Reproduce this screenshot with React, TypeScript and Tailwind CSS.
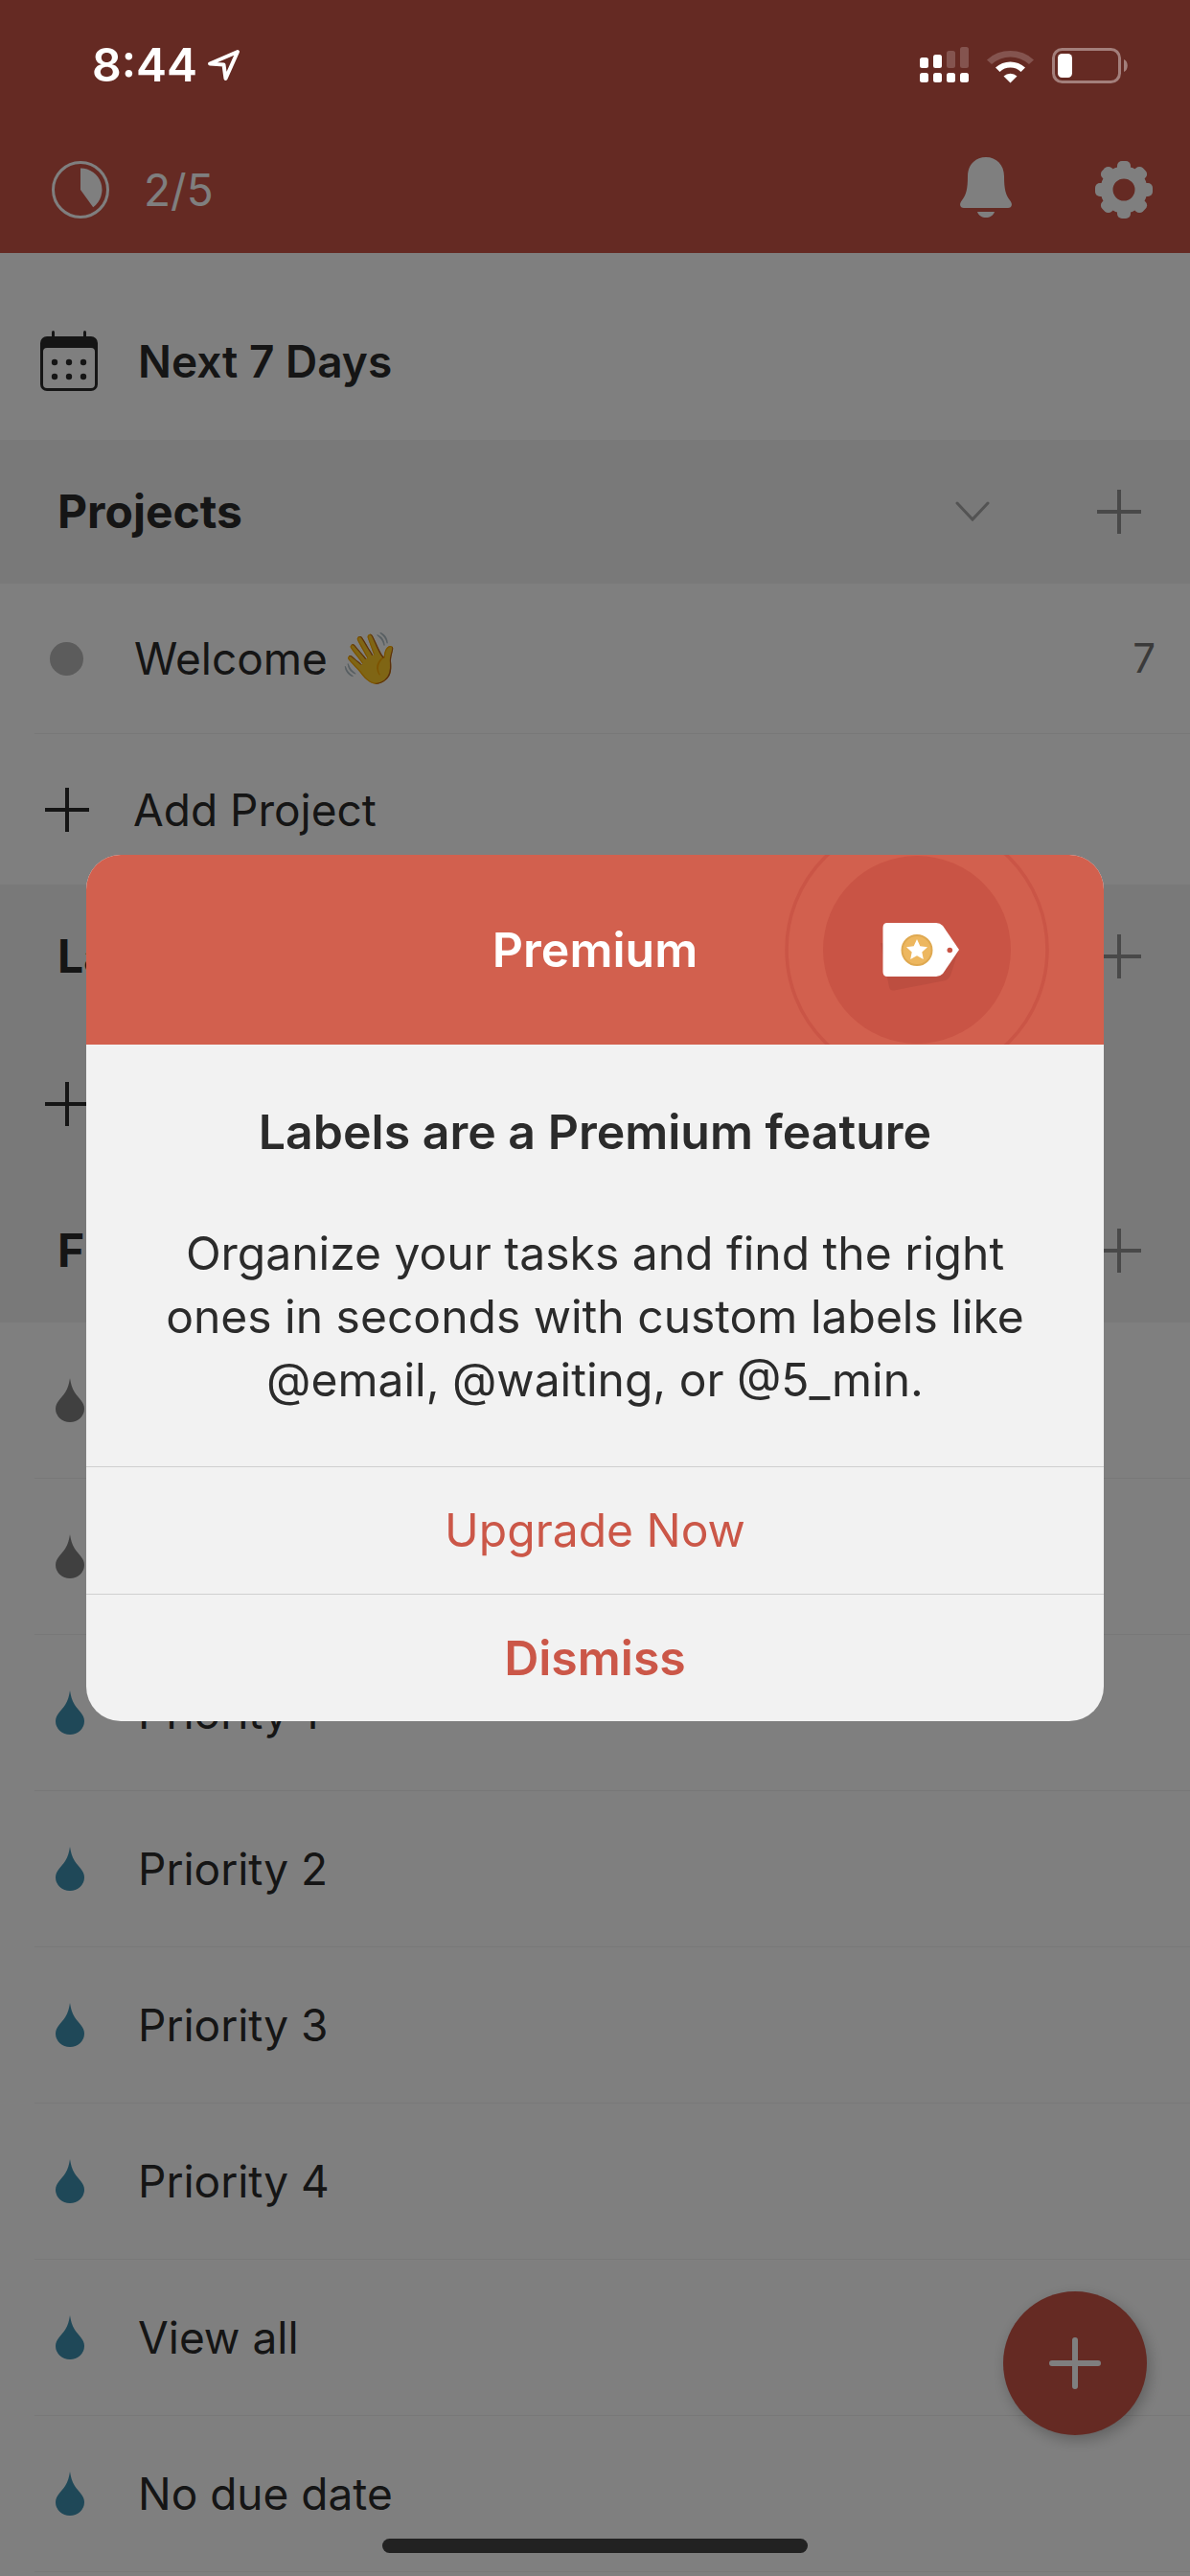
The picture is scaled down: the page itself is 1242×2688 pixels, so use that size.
import type { ReactNode } from 'react';

const FILTERS = [
    { name: 'Assigned to me', color: 'text-[#808080]' },
    { name: 'Assigned to others', color: 'text-[#808080]' },
    { name: 'Priority 1', color: 'text-[#3e90b0]' },
    { name: 'Priority 2', color: 'text-[#3e90b0]' },
    { name: 'Priority 3', color: 'text-[#3e90b0]' },
    { name: 'Priority 4', color: 'text-[#3e90b0]' },
    { name: 'View all', color: 'text-[#3e90b0]' },
    { name: 'No due date', color: 'text-[#3e90b0]' },
];

const PlusIcon = () => (
    <svg className="block size-[46px]" viewBox="0 0 46 46" stroke="currentColor" strokeWidth="4" aria-hidden="true">
        <path d="M23 0v46M0 23h46" />
    </svg>
);

const DropIcon = ({ className }: { className: string }) => (
    <svg className={`block h-[46px] w-[30px] ${className}`} viewBox="0 0 30 46" fill="currentColor" aria-hidden="true">
        <path d="M15 0C16 6 17 10 20 15C24 21 30 25 30 32A15 14 0 0 1 0 32C0 25 6 21 10 15C13 10 14 6 15 0Z" />
    </svg>
);

const CalendarIcon = () => (
    <svg className="block h-[64px] w-[60px]" viewBox="0 0 60 64" fill="currentColor" aria-hidden="true">
        <rect x="12" y="0" width="3" height="10" rx="1.5" />
        <rect x="45" y="0" width="3" height="10" rx="1.5" />
        <path fillRule="evenodd" d="M7 6h46a7 7 0 0 1 7 7v43a7 7 0 0 1-7 7H7a7 7 0 0 1-7-7V13a7 7 0 0 1 7-7zm0 12a4 4 0 0 0-4 4v34a4 4 0 0 0 4 4h46a4 4 0 0 0 4-4V22a4 4 0 0 0-4-4z" />
        {[33, 48].map((y) => [15, 30, 45].map((x) => <circle key={`${x}-${y}`} cx={x} cy={y} r="3.2" />))}
    </svg>
);

const GoalIcon = () => (
    <svg className="block size-[60px]" viewBox="0 0 60 60" aria-hidden="true">
        <circle cx="30" cy="30" r="28.5" fill="none" stroke="currentColor" strokeWidth="3" />
        <path d="M30 30V7.500A22.500 22.500 0 0 1 43.200 48.200Z" fill="currentColor" />
    </svg>
);

const BellIcon = () => (
    <svg className="block h-[64px] w-[54px]" viewBox="0 0 54 64" fill="currentColor" aria-hidden="true">
        <path d="M27 0C38 0 46 8 46 20C46 33 47.500 39 52 45C56 50 53 53 50 53H4C1 53 -2 50 2 45C6.500 39 8 33 8 20C8 8 16 0 27 0Z" />
        <path d="M18 57H36C34.500 61 31 63 27 63C23 63 19.500 61 18 57Z" />
    </svg>
);

const GearIcon = () => (
    <svg className="block size-[60px]" viewBox="-30 -30 60 60" fill="currentColor" aria-hidden="true">
        {[0, 45, 90, 135].map((deg) => (
            <rect key={deg} x="-7" y="-30" width="14" height="60" rx="5" transform={`rotate(${deg})`} mask="url(#gear-hole)" />
        ))}
        <circle r="18" fill="none" stroke="currentColor" strokeWidth="13" />
        <mask id="gear-hole">
            <rect x="-45" y="-45" width="90" height="90" fill="white" />
            <circle r="15" fill="black" />
        </mask>
    </svg>
);

const StatusBar = () => (
    <div className="fixed inset-x-0 top-0 z-20 flex h-[136px] items-center justify-between pr-[63px] pl-24 text-white">
        <div className="flex items-center gap-[9px]">
            <span className="text-[48px] leading-[60px] font-semibold">8:44</span>
            <svg className="block h-[34px] w-[36px]" viewBox="0 0 36 34" fill="none" stroke="currentColor" strokeWidth="4" strokeLinejoin="round" aria-hidden="true">
                <path d="M33 3L4 15.500L18.500 16.500L20.500 31Z" />
            </svg>
        </div>
        <svg className="block h-[38px] w-[219px]" viewBox="0 0 219 38" fill="currentColor" aria-hidden="true">
            <rect x="0" y="11" width="9" height="11" rx="2.500" />
            <rect x="14" y="8" width="9" height="14" rx="2.500" />
            <rect x="28" y="4" width="9" height="18" rx="2.500" opacity=".2" />
            <rect x="42" y="0" width="9" height="22" rx="2.500" opacity=".2" />
            {[0, 14, 28, 42].map((x) => (
                <rect key={x} x={x} y="27" width="9" height="10" rx="2.500" />
            ))}
            <path opacity=".2" d="M70 13.500A36 36 0 0 1 119 13.500L114 18A29 29 0 0 0 75 18Z" />
            <path d="M79 21.500A23 23 0 0 1 110 21.500L105.500 26A16 16 0 0 0 83.500 26Z" />
            <path d="M87.500 30.500A10.500 10.500 0 0 1 101.500 30.500L94.500 37.500Z" />
            <rect x="139.500" y="2.500" width="69" height="34" rx="9" fill="none" stroke="currentColor" strokeWidth="3" opacity=".4" />
            <rect x="144" y="7" width="15" height="25" rx="4.500" />
            <path opacity=".4" d="M213 13C218 15 218 24 213 26Z" />
        </svg>
    </div>
);

const SectionHeader = ({ title, children }: { title: string; children?: ReactNode }) => (
    <div className="flex h-[150px] items-center bg-[#f2f2f2] pr-[51px] pl-[60px]">
        <h2 className="flex-1 text-[48px] font-bold">{title}</h2>
        {children}
        <button type="button" aria-label={`Add to ${title}`} className="text-[#929292]">
            <PlusIcon />
        </button>
    </div>
);

const AddRow = ({ label, className = '' }: { label: string; className?: string }) => (
    <button type="button" className={`flex h-[157px] w-full items-center gap-[46px] pl-[47px] text-left ${className}`}>
        <PlusIcon />
        {label}
    </button>
);

const LabelBadge = () => (
    <svg className="absolute top-0 right-0 h-[198px] w-[390px]" viewBox="0 0 390 198" aria-hidden="true">
        <circle cx="195" cy="99" r="136" fill="none" stroke="#ca5546" strokeWidth="3.500" />
        <circle cx="195" cy="99" r="98" fill="#c95445" />
        <path d="M157 92L166 138Q167 142 171 141.500L225 131Q228 130 230 126L238 101Z" fill="#bd4e40" />
        <path d="M164 71H215Q219 71 222 74L239 99L222 124Q219 127 215 127H164Q159.500 127 159.500 122V76Q159.500 71 164 71Z" fill="#fff" />
        <circle cx="195" cy="99.500" r="15.500" fill="#edb75f" stroke="#dfa951" strokeWidth="2" />
        <path d="M195 88L198.300 95.300L206 96.200L200.300 101.500L201.800 109L195 105.200L188.200 109L189.700 101.500L184 96.200L191.700 95.300Z" fill="#fff" />
        <circle cx="229.300" cy="99.500" r="2.800" fill="#c95445" />
    </svg>
);

const PremiumDialog = () => (
    <div className="fixed inset-0 z-30 flex items-center justify-center px-[90px]">
        <div role="dialog" aria-modal="true" aria-labelledby="premium-title" className="w-full overflow-hidden rounded-[36px] bg-[#f2f2f2] text-center text-[48px] leading-[66px]">
            <div className="relative flex h-[198px] items-center justify-center bg-[#d2604e]">
                <LabelBadge />
                <p className="relative text-[50px] font-semibold text-white">Premium</p>
            </div>
            <div className="px-[60px] pt-[58px] pb-[57px]">
                <h1 id="premium-title" className="mb-[61px] text-[50px] font-semibold">
                    Labels are a Premium feature
                </h1>
                <p>Organize your tasks and find the right ones in seconds with custom labels like @email, @waiting, or @5_min.</p>
            </div>
            <button type="button" className="block h-[133px] w-full border-t border-[#d0d0d0] text-[#cb5748]">
                Upgrade Now
            </button>
            <button type="button" className="block h-[133px] w-full border-t border-[#d0d0d0] text-[50px] font-semibold text-[#cb5748]">
                Dismiss
            </button>
        </div>
    </div>
);

export default function App() {
    return (
        <div className="relative min-h-screen bg-white font-[Inter,'Liberation_Sans',sans-serif] text-[46px] leading-[60px] text-[#2b2b2b]">
            <header className="flex h-[264px] items-end bg-[#cb5447] pr-[39px] pb-9 pl-[54px] text-white">
                <div className="flex flex-1 items-center gap-9">
                    <GoalIcon />
                    <span>2/5</span>
                </div>
                <button type="button" aria-label="Notifications" className="mr-[87px]">
                    <BellIcon />
                </button>
                <button type="button" aria-label="Settings">
                    <GearIcon />
                </button>
            </header>

            <main>
                <div className="pt-[30px]">
                    <a href="#next-7-days" className="flex h-[165px] items-center gap-[42px] pl-[42px] font-semibold">
                        <CalendarIcon />
                        Next 7 Days
                    </a>
                </div>

                <SectionHeader title="Projects">
                    <button type="button" aria-label="Collapse projects" className="mr-[112px] text-[#a6a6a6]">
                        <svg className="block h-[22px] w-[36px]" viewBox="0 0 36 22" fill="none" stroke="currentColor" strokeWidth="3" strokeLinecap="round" aria-hidden="true">
                            <path d="M2 2L18 19L34 2" />
                        </svg>
                    </button>
                </SectionHeader>
                <div className="ml-9 border-b border-[#f0f0f0]">
                    <a href="#welcome" className="flex h-[156px] items-center pr-9 pl-4">
                        <span className="mr-[53px] size-[35px] rounded-full bg-[#b8b8b8]" />
                        <span className="flex flex-1 items-center gap-3">
                            Welcome
                            <span className="text-[52px]">👋</span>
                        </span>
                        <span className="text-[42px] text-[#757575]">7</span>
                    </a>
                </div>
                <AddRow label="Add Project" />

                <SectionHeader title="Labels" />
                <AddRow label="Add Label" className="bg-[#f2f2f2]" />

                <SectionHeader title="Filters" />
                {FILTERS.map((filter) => (
                    <div key={filter.name} className="ml-9 border-b border-[#f0f0f0]">
                        <a href="#filter" className="flex h-[162px] items-center gap-[56px] pl-[22px]">
                            <DropIcon className={filter.color} />
                            {filter.name}
                        </a>
                    </div>
                ))}
            </main>

            <button type="button" aria-label="Add task" className="fixed right-[45px] bottom-[147px] flex size-[150px] items-center justify-center rounded-full bg-[#cb5447] text-white shadow-[3px_5px_15px_rgba(0,0,0,0.25)]">
                <svg className="block size-[54px]" viewBox="0 0 54 54" stroke="currentColor" strokeWidth="6" strokeLinecap="round" aria-hidden="true">
                    <path d="M27 3v48M3 27h48" />
                </svg>
            </button>

            {/* Dimming layer, below the status bar and the dialog */}
            <div className="fixed inset-0 z-10 bg-black/50" />
            <StatusBar />
            <PremiumDialog />
            <div className="fixed bottom-6 left-1/2 z-20 h-[15px] w-[444px] -translate-x-1/2 rounded-full bg-[#222]" />
        </div>
    );
}
